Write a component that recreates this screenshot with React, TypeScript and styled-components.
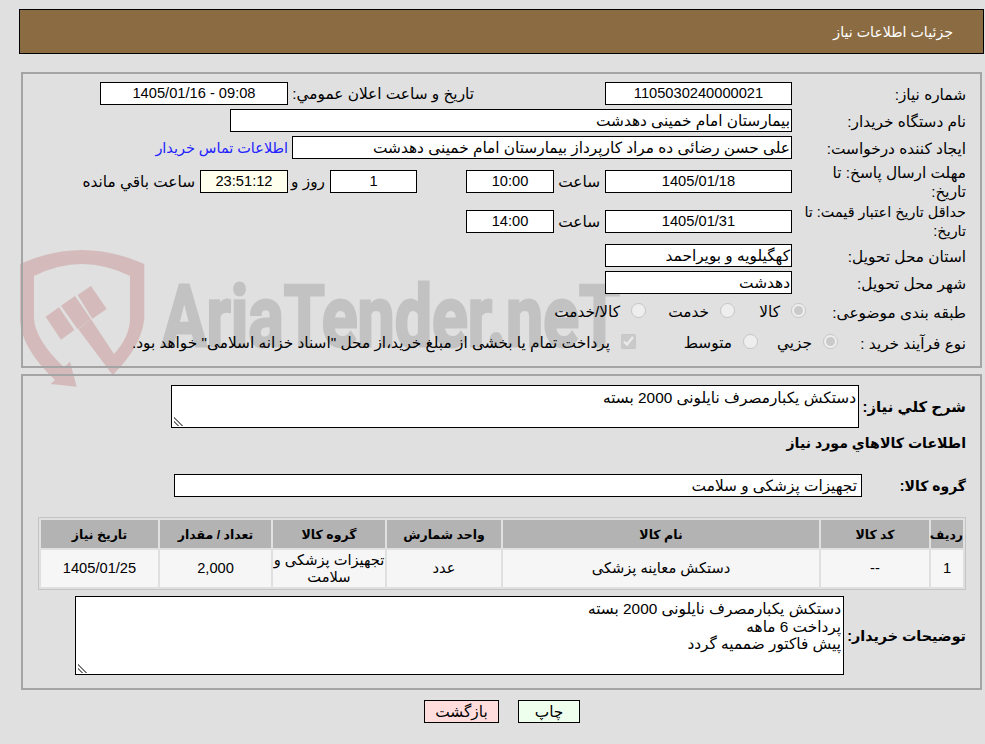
import React from "react";
import styled, { createGlobalStyle } from "styled-components";

const Global = createGlobalStyle`
  html, body { margin: 0; padding: 0; background: #e0e0e0; }
  body { font-family: "Liberation Sans", "DejaVu Sans", sans-serif; font-size: 15.35px; color: #000; }
`;

const Page = styled.div`
  position: relative;
  width: 985px;
  height: 744px;
  overflow: hidden;
  direction: rtl;
  background: #e0e0e0;
`;

const Watermark = styled.svg`
  position: absolute;
  left: 0;
  top: 0;
  width: 985px;
  height: 744px;
`;

const Content = styled.div`
  position: relative;
  padding-top: 9px;
`;

const TitleBar = styled.header`
  box-sizing: border-box;
  height: 45px;
  margin: 0 1px 0 19px;
  padding: 0 30px;
  display: flex;
  align-items: center;
  background: #8b6b42;
  border: 1px solid #000;
  color: #fff;
  font-size: 14.2px;
`;

const Section = styled.section<{ $top: number; $pt: number; $h: number }>`
  box-sizing: border-box;
  height: ${(p) => p.$h}px;
  margin: ${(p) => p.$top}px 3px 0 21px;
  padding: ${(p) => p.$pt}px 14px 0 0;
  border: 2px solid #a4a4a4;
`;

const Row = styled.div<{ $h?: number; $mb?: number; $mt?: number }>`
  display: flex;
  align-items: center;
  height: ${(p) => p.$h ?? 23}px;
  margin-top: ${(p) => p.$mt ?? 0}px;
  margin-bottom: ${(p) => p.$mb ?? 4}px;
`;

const Label = styled.label<{ $w?: number; $size?: number }>`
  box-sizing: border-box;
  flex: none;
  width: ${(p) => p.$w ?? 174}px;
  padding-top: 1px;
  font-size: ${(p) => (p.$size ? `${p.$size}px` : "inherit")};
  line-height: 19px;
  white-space: nowrap;
`;

const BoldLabel = styled.label<{ $w: number; $size?: number }>`
  flex: none;
  width: ${(p) => p.$w}px;
  font-weight: bold;
  font-size: ${(p) => p.$size ?? 14.6}px;
  white-space: nowrap;
`;

const Field = styled.div<{ $w: number; $mr?: number; $pr?: number; $num?: boolean; $tint?: boolean }>`
  box-sizing: border-box;
  flex: none;
  width: ${(p) => p.$w}px;
  height: 23px;
  margin-right: ${(p) => p.$mr ?? 0}px;
  padding: 0 ${(p) => p.$pr ?? 1}px 0 1px;
  font-size: ${(p) => (p.$num ? "14.67px" : "inherit")};
  line-height: 21px;
  white-space: nowrap;
  overflow: hidden;
  text-align: ${(p) => (p.$num ? "center" : "right")};
  background: ${(p) => (p.$tint ? "#ffffee" : "#fff")};
  border: 1px solid #000;
`;

const Caption = styled.span<{ $w?: number; $mr?: number }>`
  flex: none;
  width: ${(p) => (p.$w ? `${p.$w}px` : "auto")};
  margin-right: ${(p) => p.$mr ?? 0}px;
  white-space: nowrap;
`;

const ContactLink = styled.a`
  margin-right: 4px;
  color: #2222ff;
  font-size: 14.45px;
  white-space: nowrap;
`;

const Option = styled.span<{ $w?: number }>`
  flex: none;
  display: flex;
  align-items: center;
  gap: 11px;
  width: ${(p) => (p.$w ? `${p.$w}px` : "auto")};
  white-space: nowrap;
`;

const Radio = styled.input.attrs({ type: "radio", disabled: true })`
  flex: none;
  width: 15px;
  height: 15px;
  margin: -4px 0 0;
`;

const Check = styled.input.attrs({ type: "checkbox", disabled: true })`
  flex: none;
  width: 15px;
  height: 15px;
  margin: -4px 0 0;
`;

const Note = styled.textarea<{ $w: number; $h: number }>`
  box-sizing: border-box;
  flex: none;
  display: block;
  width: ${(p) => p.$w}px;
  height: ${(p) => p.$h}px;
  margin: 0;
  padding: 3px 2px 0;
  font-family: inherit;
  font-size: 15.35px;
  line-height: 17.5px;
  color: #000;
  background: #fff;
  border: 1px solid #000;
  border-radius: 0;
  outline: none;

  &::-webkit-resizer {
    background: linear-gradient(
        45deg,
        transparent 0 18%,
        #777 18% 28%,
        transparent 28% 44%,
        #777 44% 54%,
        transparent 54%
      )
      left 2px bottom 1px / 9px 9px no-repeat;
  }
`;

const Table = styled.table`
  width: 928px;
  border: 1px solid #c4c4c4;
  border-spacing: 2px;
  table-layout: fixed;
  font-size: 14.67px;
`;

const Th = styled.th<{ $w: number }>`
  width: ${(p) => p.$w}px;
  height: 28px;
  padding: 0;
  background: #b3b3b3;
  font-size: 12.5px;
  font-weight: bold;
`;

const Td = styled.td`
  height: 37px;
  padding: 0;
  background: #f6f6f6;
  text-align: center;
  line-height: 17px;
  white-space: pre;
`;

const Buttons = styled.div`
  display: flex;
  gap: 19px;
  margin: 10px 405px 0 0;
`;

const Button = styled.button<{ $w: number; $bg: string }>`
  box-sizing: border-box;
  width: ${(p) => p.$w}px;
  height: 23px;
  padding: 0;
  font-family: inherit;
  font-size: 15.35px;
  color: #000;
  background: ${(p) => p.$bg};
  border: 1px solid #000;
`;

const columns: [string, number][] = [
  ["ردیف", 32],
  ["کد کالا", 108],
  ["نام کالا", 316],
  ["واحد شمارش", 114],
  ["گروه کالا", 112],
  ["تعداد / مقدار", 111],
  ["تاریخ نیاز", 117],
];

const cells = ["1", "--", "دستکش معاینه پزشکی", "عدد", "تجهیزات پزشکی و\nسلامت", "2,000", "1405/01/25"];

export default function App() {
  return (
    <Page>
      <Global />
      <Watermark viewBox="0 0 985 744" aria-hidden="true">
        <g transform="translate(10 240) scale(0.3333)" fill="#a82828" opacity="0.2">
          <path d="M30 72 Q215 -12 403 72 L403 235 Q395 320 308 405 L205 268 L243 238 L312 342 Q360 290 360 235 L360 108 Q215 36 72 108 L72 235 Q75 300 162 382 L180 365 L200 440 L122 432 L135 420 Q30 320 30 235 Z" />
          <path d="M107 230 L147 202 L193 270 L153 299 Z" />
          <path d="M153 197 L195 168 L243 238 L203 268 Z" />
          <path d="M203 165 L243 138 L290 207 L247 236 Z" />
        </g>
        <text
          x="162"
          y="346"
          textLength="458"
          lengthAdjust="spacingAndGlyphs"
          fontFamily="Roboto, sans-serif"
          fontWeight="700"
          fontSize="86"
          fill="#000"
          stroke="#000"
          strokeWidth="3"
          opacity="0.13"
          direction="ltr"
        >
          AriaTender.neT
        </text>
      </Watermark>
      <Content>
        <TitleBar>جزئیات اطلاعات نیاز</TitleBar>

        <Section $top={18} $pt={8} $h={296}>
          <Row>
            <Label>شماره نیاز:</Label>
            <Field $w={187} $num>1105030240000021</Field>
            <Caption $w={181} $mr={131}>تاریخ و ساعت اعلان عمومي:</Caption>
            <Field $w={188} $mr={5} $num>09:08 - 1405/01/16</Field>
          </Row>
          <Row>
            <Label>نام دستگاه خریدار:</Label>
            <Field $w={562}>بیمارستان امام خمینی دهدشت</Field>
          </Row>
          <Row $mb={6}>
            <Label>ایجاد کننده درخواست:</Label>
            <Field $w={500}>علی حسن رضائی ده مراد کارپرداز بیمارستان امام خمینی دهدشت</Field>
            <ContactLink>اطلاعات تماس خریدار</ContactLink>
          </Row>
          <Row $h={33} $mb={7}>
            <Label>مهلت ارسال پاسخ: تا<br />تاریخ:</Label>
            <Field $w={187} $num>1405/01/18</Field>
            <Caption $w={46} $mr={5}>ساعت</Caption>
            <Field $w={88} $num>10:00</Field>
            <Field $w={87} $mr={49} $num>1</Field>
            <Caption $w={37} $mr={5}>روز و</Caption>
            <Field $w={88} $num $tint>23:51:12</Field>
            <Caption $mr={5}>ساعت باقي مانده</Caption>
          </Row>
          <Row $h={33} $mb={6}>
            <Label $size={14.4}>حداقل تاریخ اعتبار قیمت: تا<br />تاریخ:</Label>
            <Field $w={187} $num>1405/01/31</Field>
            <Caption $w={46} $mr={5}>ساعت</Caption>
            <Field $w={88} $num>14:00</Field>
          </Row>
          <Row>
            <Label>استان محل تحویل:</Label>
            <Field $w={187}>کهگیلویه و بویراحمد</Field>
          </Row>
          <Row>
            <Label>شهر محل تحویل:</Label>
            <Field $w={187}>دهدشت</Field>
          </Row>
          <Row $h={28}>
            <Label $w={160}>طبقه بندی موضوعی:</Label>
            <Option $w={71}><Radio defaultChecked />کالا</Option>
            <Option $w={89}><Radio />خدمت</Option>
            <Option><Radio />کالا/خدمت</Option>
          </Row>
          <Row $h={26} $mb={0}>
            <Label $w={128}>نوع فرآیند خرید :</Label>
            <Option $w={80}><Radio defaultChecked />جزیي</Option>
            <Option $w={122}><Radio />متوسط</Option>
            <Option><Check defaultChecked />پرداخت تمام یا بخشی از مبلغ خرید،از محل "اسناد خزانه اسلامی" خواهد بود.</Option>
          </Row>
        </Section>

        <Section $top={6} $pt={9} $h={316}>
          <Row $h={43} $mb={5}>
            <BoldLabel $w={107} $size={14.9}>شرح کلي نیاز:</BoldLabel>
            <Note $w={688} $h={43} readOnly defaultValue="دستکش یکبارمصرف نایلونی 2000 بسته" />
          </Row>
          <Row $h={20} $mb={21}>
            <BoldLabel $w={300} $size={14.15}>اطلاعات کالاهاي مورد نیاز</BoldLabel>
          </Row>
          <Row $mb={20}>
            <BoldLabel $w={104} $size={14}>گروه کالا:</BoldLabel>
            <Field $w={688} $pr={4}>تجهیزات پزشکی و سلامت</Field>
          </Row>
          <Table>
            <thead>
              <tr>
                {columns.map(([name, w]) => (
                  <Th key={name} $w={w}>{name}</Th>
                ))}
              </tr>
            </thead>
            <tbody>
              <tr>
                {cells.map((c) => (
                  <Td key={c}>{c}</Td>
                ))}
              </tr>
            </tbody>
          </Table>
          <Row $h={79} $mb={0} $mt={6}>
            <BoldLabel $w={122} $size={14.3}>توضیحات خریدار:</BoldLabel>
            <Note
              $w={769}
              $h={79}
              readOnly
              defaultValue={"دستکش یکبارمصرف نایلونی 2000 بسته\nپرداخت 6 ماهه\nپیش فاکتور ضممیه گردد"}
            />
          </Row>
        </Section>

        <Buttons>
          <Button $w={62} $bg="#eeffee">چاپ</Button>
          <Button $w={75} $bg="#ffdddd">بازگشت</Button>
        </Buttons>
      </Content>
    </Page>
  );
}
